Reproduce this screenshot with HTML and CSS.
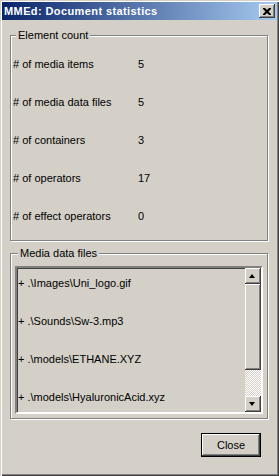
FILE: index.html
```html
<!DOCTYPE html>
<html lang="en">

<head>
    <meta charset="UTF-8">
    <title>MMEd: Document statistics</title>
    <link rel="stylesheet" href="styles.css">
</head>

<body>
    <div class="window">
        <div class="titlebar">
            <span class="title">MMEd: Document statistics</span>
            <a href="javascript:;" class="tbtn">
                <svg width="8" height="7" viewBox="0 0 8 7">
                    <path d="M0 0h2l2 2 2-2h2v1L5.5 3.5 8 6v1H6L4 5 2 7H0V6l2.5-2.5L0 1z" fill="#000"/>
                </svg>
            </a>
        </div>
        <div class="content">
            <fieldset class="group">
                <legend>Element count</legend>
                <div class="row"><span class="label"># of media items</span><span>5</span></div>
                <div class="row"><span class="label"># of media data files</span><span>5</span></div>
                <div class="row"><span class="label"># of containers</span><span>3</span></div>
                <div class="row"><span class="label"># of operators</span><span>17</span></div>
                <div class="row"><span class="label"># of effect operators</span><span>0</span></div>
            </fieldset>
            <fieldset class="group files">
                <legend>Media data files</legend>
                <div class="list">
                    <ul>
                        <li>+ .\Images\Uni_logo.gif</li>
                        <li>+ .\Sounds\Sw-3.mp3</li>
                        <li>+ .\models\ETHANE.XYZ</li>
                        <li>+ .\models\HyaluronicAcid.xyz</li>
                    </ul>
                    <div class="scrollbar">
                        <span class="sbtn up"></span>
                        <span class="thumb"></span>
                        <span class="track"></span>
                        <span class="sbtn down"></span>
                    </div>
                </div>
            </fieldset>
            <div class="actions">
                <a href="javascript:;" class="btn">Close</a>
            </div>
        </div>
    </div>
</body>

</html>
```

FILE: styles.css
```css
* {
    padding: 0;
    margin: 0;
    box-sizing: border-box;
}

ul,
li {
    list-style: none;
}

body {
    font-family: "Liberation Sans", Arial, sans-serif;
    font-size: 11px;
    color: #000;
    background: #d4d0c8;
}

.window {
    width: 279px;
    height: 476px;
    padding: 2px;
    background: #d4d0c8;
    box-shadow: inset 1px 1px #d4d0c8, inset 2px 2px #fff, inset -1px -1px #404040, inset -2px -2px #808080;
}

.titlebar {
    height: 18px;
    display: flex;
    align-items: center;
    justify-content: space-between;
    padding: 0 2px 0 2px;
    background: linear-gradient(to right, #0a246a, #a6caf0);
}

.title {
    color: #fff;
    font-weight: bold;
    letter-spacing: 0.4px;
}

.tbtn {
    width: 16px;
    height: 14px;
    display: flex;
    align-items: center;
    justify-content: center;
    background: #d4d0c8;
    box-shadow: inset -1px -1px #404040, inset 1px 1px #fff, inset -2px -2px #808080;
}

.content {
    padding: 9px 8px 0;
}

.group {
    border: 1px solid #808080;
    box-shadow: inset 1px 1px #fff, 1px 1px #fff;
    padding: 3px 2px 5px;
    width: 258px;
}

.group legend {
    margin-left: 3px;
    padding: 0 2px;
    line-height: 13px;
    background: #d4d0c8;
}

.row {
    display: flex;
    height: 38px;
    line-height: 38px;
}

.label {
    width: 125px;
}

.files {
    margin-top: 6px;
    padding: 6px 4px 4px;
}

.list {
    display: flex;
    height: 148px;
    border: 2px solid;
    border-color: #808080 #fff #fff #808080;
    box-shadow: inset 1px 1px #404040, inset -1px -1px #d4d0c8;
    overflow: hidden;
}

.list ul {
    flex: 1;
    padding-left: 1px;
}

.list li {
    height: 38px;
    line-height: 30px;
    white-space: nowrap;
}

.scrollbar {
    width: 16px;
    display: flex;
    flex-direction: column;
}

.sbtn,
.thumb {
    display: block;
    background: #d4d0c8;
    box-shadow: inset -1px -1px #404040, inset 1px 1px #fff, inset -2px -2px #808080;
}

.sbtn {
    height: 16px;
    position: relative;
}

.sbtn::after {
    content: "";
    position: absolute;
    left: 4px;
    border-left: 3.5px solid transparent;
    border-right: 3.5px solid transparent;
}

.up::after {
    top: 6px;
    border-bottom: 4px solid #000;
}

.down::after {
    top: 6px;
    border-top: 4px solid #000;
}

.thumb {
    height: 86px;
}

.track {
    flex: 1;
    background: repeating-conic-gradient(#fff 0 25%, #d4d0c8 0 50%) 0 0 / 2px 2px;
}

.actions {
    display: flex;
    justify-content: flex-end;
    padding: 14px 8px 0 0;
}

.btn {
    width: 60px;
    height: 24px;
    line-height: 22px;
    text-align: center;
    color: #000;
    text-decoration: none;
    border: 1px solid #000;
    background: #d4d0c8;
    box-shadow: inset -1px -1px #404040, inset 1px 1px #fff, inset -2px -2px #808080;
}
```
